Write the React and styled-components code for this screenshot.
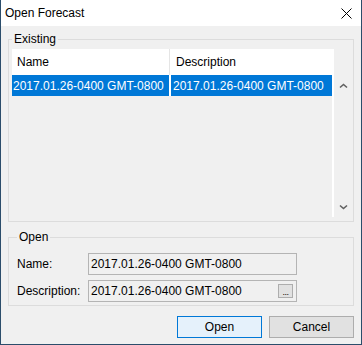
import styled, { createGlobalStyle } from "styled-components";

const GlobalStyle = createGlobalStyle`
  html, body {
    margin: 0;
    padding: 0;
    background: #f0f0f0;
  }
  body {
    font-family: "Liberation Sans", Arial, sans-serif;
    font-size: 12px;
    color: #000;
  }
  * {
    box-sizing: border-box;
  }
`;

const Window = styled.div`
  width: 362px;
  height: 345px;
  display: flex;
  flex-direction: column;
  border: 1px solid #2b4d6b;
  border-top: none;
  background: #f0f0f0;
`;

const TitleBar = styled.div`
  height: 26px;
  flex: none;
  display: flex;
  align-items: center;
  justify-content: space-between;
  padding: 0 9px 0 4px;
  background: #fff;
`;

const Title = styled.span`
  font-size: 12px;
  line-height: 14px;
`;

const Body = styled.div`
  flex: 1;
  display: flex;
  flex-direction: column;
  padding: 6px 7px 0 7px;
`;

const Group = styled.fieldset`
  margin: ${p => p.$top || 0}px 0 0 0;
  padding: ${p => p.$pad};
  border: 1px solid #dcdcdc;
  min-width: 0;
`;

const Legend = styled.legend`
  padding: 0 2px;
  margin: 0;
  font-size: 12px;
  line-height: 14px;
`;

const ListArea = styled.div`
  display: flex;
  height: 168px;
`;

const Grid = styled.div`
  width: 322px;
  border-right: 2px solid #fff;
`;

const HeaderRow = styled.div`
  display: grid;
  grid-template-columns: 157px 163px;
  height: 26px;
  background: #fff;
`;

const HeaderCell = styled.div`
  display: flex;
  align-items: center;
  padding-left: ${p => (p.$divider ? 6 : 5)}px;
  border-left: ${p => (p.$divider ? "1px solid #e5e5e5" : "none")};
`;

const DataRow = styled.div`
  display: grid;
  grid-template-columns: 157px 163px;
  height: 21px;
`;

const DataCell = styled.div`
  display: flex;
  align-items: center;
  padding-left: ${p => (p.$divider ? 2 : 1)}px;
  background: ${p => (p.$selected ? "#0078d7" : "#fff")};
  color: ${p => (p.$selected ? "#fff" : "#000")};
  border-left: ${p => (p.$divider ? "2px solid #fff" : "none")};
  white-space: nowrap;
  overflow: hidden;
`;

const ScrollBar = styled.div`
  flex: 1;
  display: flex;
  flex-direction: column;
  justify-content: space-between;
  align-items: center;
  padding-top: 26px;
`;

const ScrollArrow = styled.div`
  height: 21px;
  width: 100%;
  display: flex;
  align-items: center;
  justify-content: center;
`;

const FieldGrid = styled.div`
  display: grid;
  grid-template-columns: 71px 209px;
  grid-auto-rows: 22px;
  row-gap: 5px;
  align-items: center;
`;

const FieldLabel = styled.span`
  line-height: 14px;
`;

const TextBox = styled.div`
  height: 22px;
  display: flex;
  align-items: center;
  justify-content: space-between;
  padding: 0 3px 0 2px;
  border: 1px solid #b4b4b4;
  background: #f0f0f0;
  white-space: nowrap;
`;

const BrowseButton = styled.div`
  width: 15px;
  height: 14px;
  border: 1px solid #adadad;
  background: #e1e1e1;
  font-size: 9px;
  line-height: 14px;
  text-align: center;
  letter-spacing: -0.5px;
`;

const ButtonBar = styled.div`
  display: flex;
  justify-content: flex-end;
  gap: 7px;
  margin-top: 10px;
`;

const Button = styled.div`
  width: 85px;
  height: 22px;
  display: flex;
  align-items: center;
  justify-content: center;
  border: 1px solid ${p => (p.$primary ? "#0078d7" : "#adadad")};
  background: ${p => (p.$primary ? "#e5f1fb" : "#e1e1e1")};
`;

const Chevron = ({ down }) => (
  <svg width="9" height="6" viewBox="0 0 9 6">
    <polyline
      points={down ? "1,1.5 4.5,4.5 8,1.5" : "1,4.5 4.5,1.5 8,4.5"}
      fill="none"
      stroke="#606060"
      strokeWidth="1.6"
    />
  </svg>
);

const CloseIcon = () => (
  <svg width="11" height="11" viewBox="0 0 11 11">
    <path d="M0.5 0.5 L10.5 10.5 M10.5 0.5 L0.5 10.5" stroke="#000" strokeWidth="1" />
  </svg>
);

const forecasts = [
  { name: "2017.01.26-0400 GMT-0800", description: "2017.01.26-0400 GMT-0800" },
];

const App = () => {
  const selected = forecasts[0];

  return (
    <>
      <GlobalStyle />
      <Window>
        <TitleBar>
          <Title>Open Forecast</Title>
          <CloseIcon />
        </TitleBar>
        <Body>
          <Group $pad="3px 0 4px 3px">
            <Legend>Existing</Legend>
            <ListArea>
              <Grid>
                <HeaderRow>
                  <HeaderCell>Name</HeaderCell>
                  <HeaderCell $divider>Description</HeaderCell>
                </HeaderRow>
                {forecasts.map((f, i) => (
                  <DataRow key={i}>
                    <DataCell $selected={i === 0}>{f.name}</DataCell>
                    <DataCell $selected={i === 0} $divider>{f.description}</DataCell>
                  </DataRow>
                ))}
              </Grid>
              <ScrollBar>
                <ScrollArrow><Chevron /></ScrollArrow>
                <ScrollArrow><Chevron down /></ScrollArrow>
              </ScrollBar>
            </ListArea>
          </Group>
          <Group $top={8} $pad="9px 0 3px 8px">
            <Legend>Open</Legend>
            <FieldGrid>
              <FieldLabel>Name:</FieldLabel>
              <TextBox>{selected.name}</TextBox>
              <FieldLabel>Description:</FieldLabel>
              <TextBox>
                {selected.description}
                <BrowseButton>...</BrowseButton>
              </TextBox>
            </FieldGrid>
          </Group>
          <ButtonBar>
            <Button $primary>Open</Button>
            <Button>Cancel</Button>
          </ButtonBar>
        </Body>
      </Window>
    </>
  );
};

export default App;
